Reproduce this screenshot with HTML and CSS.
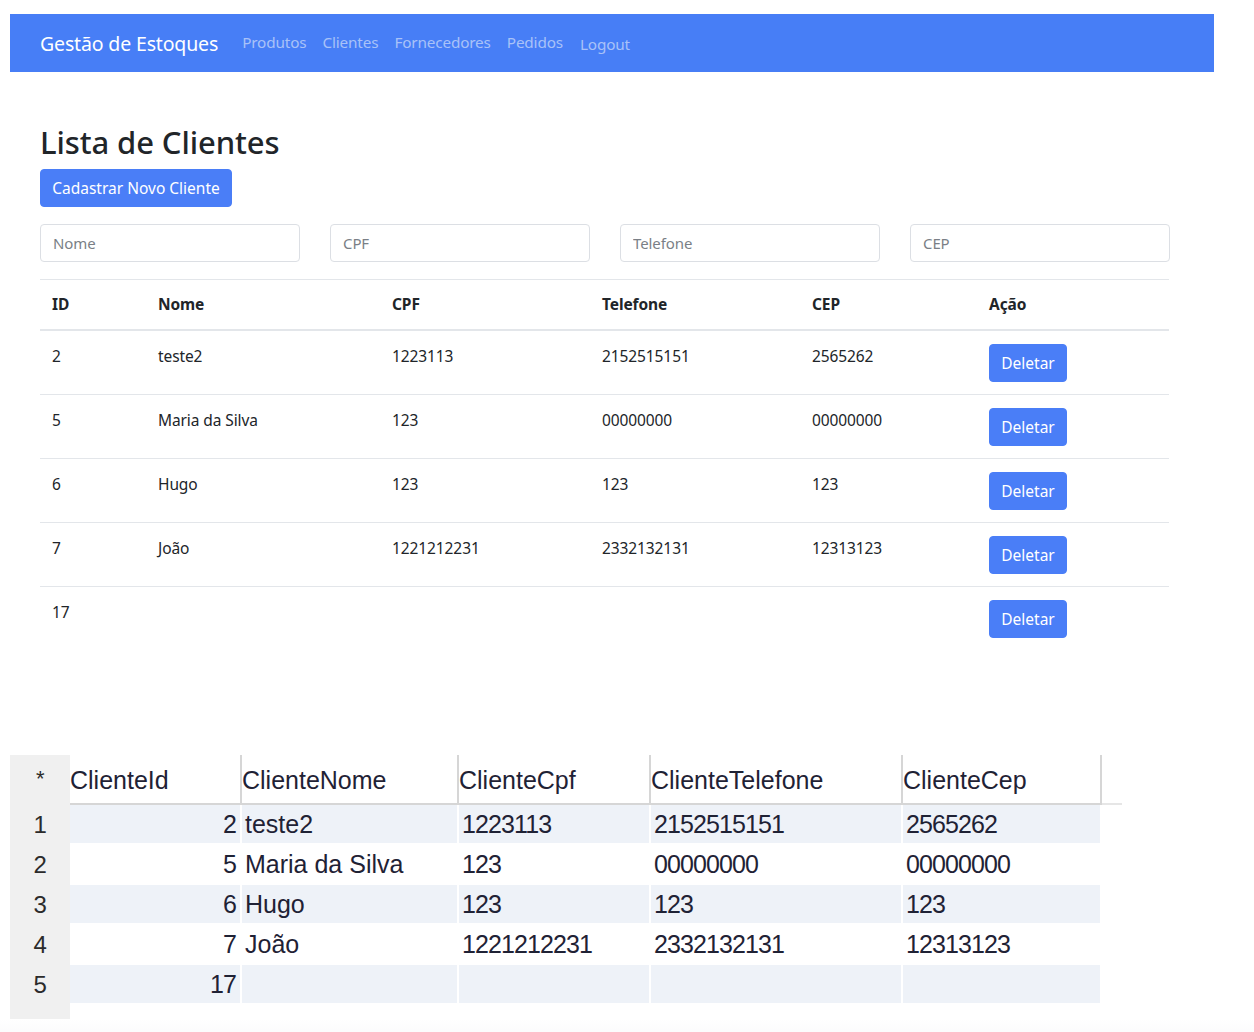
FILE: index.html
```html
<!DOCTYPE html>
<html lang="pt">
<head>
<meta charset="utf-8">
<title>Gestão de Estoques</title>
<link rel="stylesheet" href="styles.css">
</head>
<body>
<div class="page">
  <nav class="navbar">
    <span class="brand">Gestão de Estoques</span>
    <a class="nav-link">Produtos</a>
    <a class="nav-link">Clientes</a>
    <a class="nav-link">Fornecedores</a>
    <a class="nav-link">Pedidos</a>
    <a class="nav-link logout">Logout</a>
  </nav>

  <main class="container">
    <h2 class="title">Lista de Clientes</h2>
    <button class="btn btn-primary btn-new">Cadastrar Novo Cliente</button>
    <div class="filters">
      <input class="form-control" placeholder="Nome">
      <input class="form-control" placeholder="CPF">
      <input class="form-control" placeholder="Telefone">
      <input class="form-control" placeholder="CEP">
    </div>
    <table class="table">
      <thead>
        <tr><th class="c-id">ID</th><th class="c-nome">Nome</th><th class="c-cpf">CPF</th><th class="c-tel">Telefone</th><th class="c-cep">CEP</th><th>Ação</th></tr>
      </thead>
      <tbody>
        <tr><td>2</td><td>teste2</td><td>1223113</td><td>2152515151</td><td>2565262</td><td><button class="btn btn-primary btn-del">Deletar</button></td></tr>
        <tr><td>5</td><td>Maria da Silva</td><td>123</td><td>00000000</td><td>00000000</td><td><button class="btn btn-primary btn-del">Deletar</button></td></tr>
        <tr><td>6</td><td>Hugo</td><td>123</td><td>123</td><td>123</td><td><button class="btn btn-primary btn-del">Deletar</button></td></tr>
        <tr><td>7</td><td>João</td><td>1221212231</td><td>2332132131</td><td>12313123</td><td><button class="btn btn-primary btn-del">Deletar</button></td></tr>
        <tr><td>17</td><td></td><td></td><td></td><td></td><td><button class="btn btn-primary btn-del">Deletar</button></td></tr>
      </tbody>
    </table>
  </main>

  <section class="grid">
    <div class="rh star">*</div>
    <div class="gh">ClienteId</div>
    <div class="gh">ClienteNome</div>
    <div class="gh">ClienteCpf</div>
    <div class="gh">ClienteTelefone</div>
    <div class="gh">ClienteCep</div>
    <div class="gline"></div>

    <div class="rh">1</div>
    <div class="gc num s">2</div><div class="gc s">teste2</div><div class="gc n s">1223113</div><div class="gc n s">2152515151</div><div class="gc n s">2565262</div><div class="gend"></div>
    <div class="rh">2</div>
    <div class="gc num">5</div><div class="gc">Maria da Silva</div><div class="gc n">123</div><div class="gc n">00000000</div><div class="gc n">00000000</div><div class="gend"></div>
    <div class="rh">3</div>
    <div class="gc num s">6</div><div class="gc s">Hugo</div><div class="gc n s">123</div><div class="gc n s">123</div><div class="gc n s">123</div><div class="gend"></div>
    <div class="rh">4</div>
    <div class="gc num">7</div><div class="gc">João</div><div class="gc n">1221212231</div><div class="gc n">2332132131</div><div class="gc n">12313123</div><div class="gend"></div>
    <div class="rh">5</div>
    <div class="gc num s">17</div><div class="gc s"></div><div class="gc s"></div><div class="gc s"></div><div class="gc s"></div><div class="gend"></div>
    <div class="rh"></div>
  </section>
  <div class="bottom-strip"></div>
</div>
</body>
</html>
```

FILE: styles.css
```css
* { box-sizing: border-box; }

body {
  margin: 0;
  background: #ffffff;
  font-family: "Noto Sans", "Open Sans", sans-serif;
  color: #212529;
}

.page {
  width: 1254px;
  padding-top: 14px;
}

/* navbar */
.navbar {
  margin: 0 40px 0 10px;
  height: 58px;
  background: #477ef6;
  display: flex;
  align-items: center;
  padding-left: 30px;
}

.brand {
  color: #ffffff;
  font-size: 19.5px;
  margin-right: 16px;
  letter-spacing: -0.15px;
}

.nav-link {
  color: #a9c2f8;
  font-size: 15.3px;
  padding: 0 8px;
  letter-spacing: -0.15px;
  margin-top: -2px;
}
.nav-link.logout { margin-top: 1px; margin-left: 1px; }

/* container */
.container {
  margin: 0 85px 0 40px;
  padding-top: 52px;
}

.title {
  margin: 0 0 8px 0;
  font-size: 31px;
  font-weight: 500;
  line-height: 37px;
  letter-spacing: -0.1px;
  color: #212529;
}

.btn {
  font-family: inherit;
  border: 1px solid #4a7ef7;
  background: #4a7ef7;
  color: #ffffff;
  border-radius: 4px;
  cursor: pointer;
}

.btn-new {
  height: 38px;
  width: 192px;
  font-size: 15.5px;
  padding: 0;
}

.filters {
  display: grid;
  grid-template-columns: repeat(4, 260px);
  column-gap: 30px;
  margin-top: 17px;
}

.form-control {
  height: 38px;
  border: 1px solid #dcdfe4;
  border-radius: 4px;
  padding: 0 12px;
  font-family: inherit;
  font-size: 15px;
  color: #495057;
  outline: none;
}
.form-control::placeholder { color: #7a7f86; letter-spacing: -0.1px; }

.table {
  width: 1129px;
  margin-top: 17px;
  border-collapse: collapse;
  font-size: 15.5px;
  letter-spacing: -0.1px;
}

.table th,
.table td {
  text-align: left;
  vertical-align: top;
  padding: 12px 12px;
  line-height: 24px;
  border-top: 1px solid #e3e6ea;
}

.table th {
  font-weight: 700;
  border-bottom: 2px solid #e3e6ea;
  height: 50px;
}

.table td { height: 64px; padding-top: 13px; }
.table tbody tr:first-child td { border-top: none; }

.c-id { width: 106px; }
.c-nome { width: 234px; }
.c-cpf { width: 210px; }
.c-tel { width: 210px; }
.c-cep { width: 177px; }

.btn-del {
  height: 38px;
  width: 78px;
  font-size: 15.5px;
  padding: 0;
}

/* SQL result grid */
.grid {
  margin: 105px 0 0 10px;
  display: grid;
  grid-template-columns: 60px 172px 217px 192px 252px 199px 20px;
  grid-template-rows: 50px repeat(5, 40px) 14px;
  font-family: "Liberation Sans", Arial, sans-serif;
  font-size: 25px;
  color: #1f2235;
  width: 1112px;
}

.rh {
  background: #f0f0f0;
  display: flex;
  align-items: center;
  justify-content: center;
  font-size: 24px;
  color: #2b2b2b;
  letter-spacing: -0.5px;
}
.rh.star { font-size: 22px; padding-bottom: 2px; }

.gh {
  display: flex;
  align-items: center;
  border-right: 2px solid #d6d6d6;
  border-bottom: 2px solid #d6d6d6;
  padding-top: 2px;
}

.gline {
  border-bottom: 2px solid #e6e6e6;
}

.gc {
  display: flex;
  align-items: center;
  padding-left: 3px;
  border-right: 2px solid #ffffff;
  border-bottom: 2px solid #ffffff;
  white-space: nowrap;
}
.gc.n { letter-spacing: -0.9px; }
.gc.s { background: #eef2f8; }
.gc.num { justify-content: flex-end; padding-right: 4px; padding-left: 0; letter-spacing: -0.9px; }

.bottom-strip {
  height: 30px;
  background: linear-gradient(#ffffff, #f7f7f9);
}
```
